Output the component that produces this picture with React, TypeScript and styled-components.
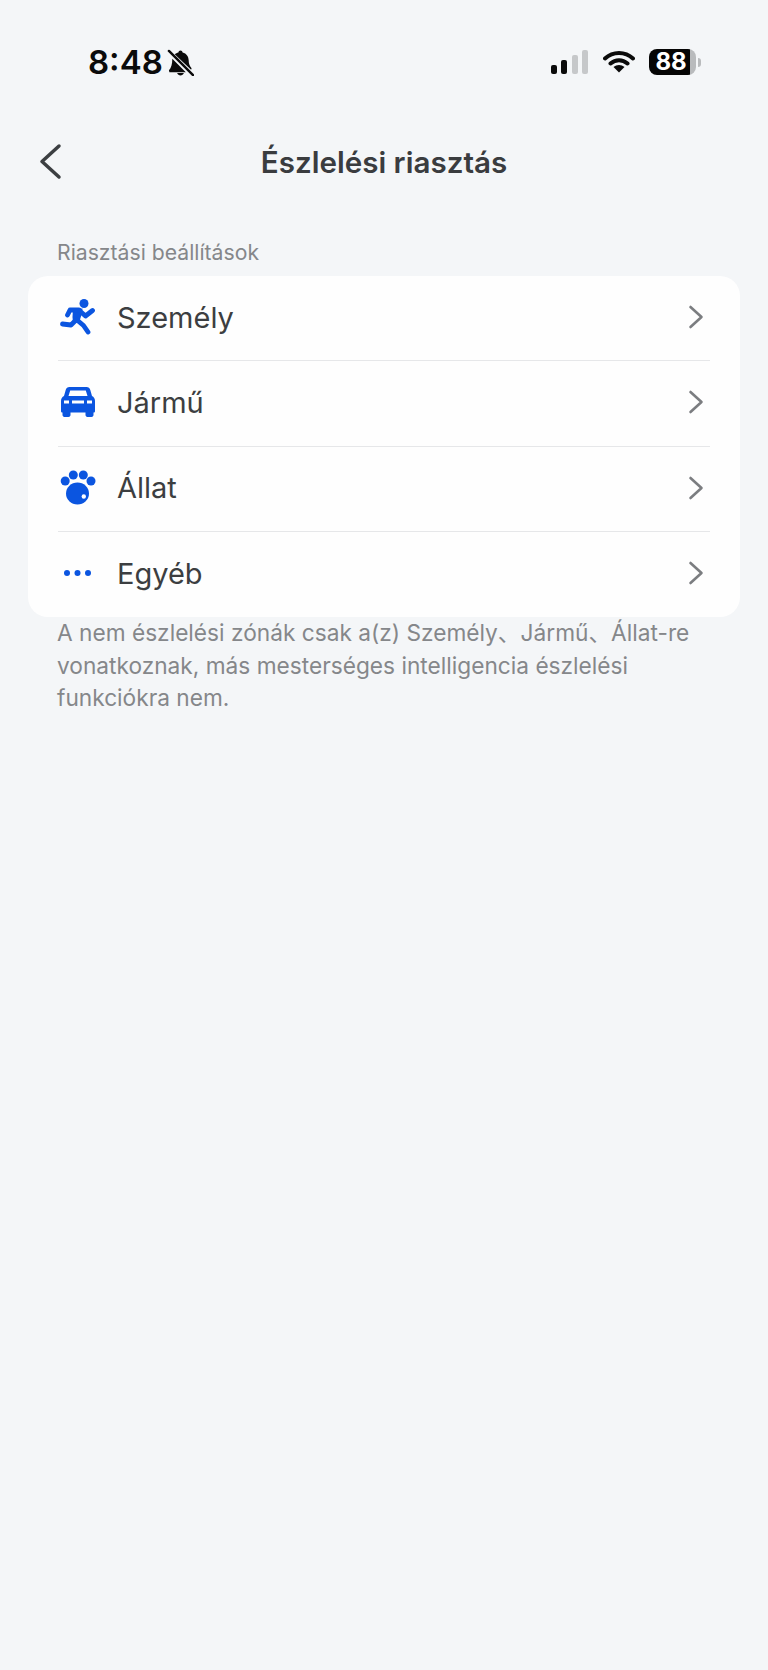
import styled, { createGlobalStyle } from 'styled-components';

const GlobalStyle = createGlobalStyle`
  html, body {
    margin: 0;
    padding: 0;
    background: #f4f6f8;
  }
  body {
    font-family: "Inter", "Noto Sans CJK SC", sans-serif;
  }
`;

const Page = styled.div`
  width: 768px;
  height: 1670px;
  overflow: hidden;
  background: #f4f6f8;
`;

const StatusBar = styled.div`
  height: 124px;
  display: flex;
  align-items: center;
  padding: 0 67px 0 88px;
  box-sizing: border-box;
`;

const Time = styled.span`
  font-size: 33px;
  font-weight: 600;
  color: #0b0b0b;
`;

const BellIcon = styled.svg`
  width: 27px;
  height: 27px;
  margin-left: 4px;
`;

const StatusRight = styled.div`
  margin-left: auto;
  display: flex;
  align-items: center;
`;

const Signal = styled.div`
  display: flex;
  align-items: flex-end;
  gap: 4.5px;
  height: 24px;
`;

const SignalBar = styled.span<{ $h: number; $off?: boolean }>`
  width: 6px;
  height: ${(p) => p.$h}px;
  border-radius: 2px;
  background: ${(p) => (p.$off ? '#c6c8ca' : '#0b0b0b')};
`;

const WifiIcon = styled.svg`
  width: 32px;
  height: 24px;
  margin-left: 15px;
  margin-top: -2px;
`;

const Battery = styled.div`
  width: 47px;
  height: 26px;
  margin-left: 14px;
  border-radius: 8px;
  background: linear-gradient(to right, #050505 88%, #b9bbbd 88%);
  color: #fff;
  font-size: 24px;
  font-weight: 700;
  line-height: 26px;
  text-align: center;
  padding-right: 3px;
  box-sizing: border-box;
`;

const BatteryTip = styled.span`
  width: 3px;
  height: 9px;
  margin-left: 2px;
  border-radius: 0 3px 3px 0;
  background: #b9bbbd;
`;

const NavBar = styled.div`
  height: 76px;
  position: relative;
  display: flex;
  align-items: center;
  justify-content: center;
`;

const BackIcon = styled.svg`
  position: absolute;
  left: 38px;
  top: 18px;
  width: 26px;
  height: 38px;
`;

const Title = styled.h1`
  margin: 0;
  font-size: 29.6px;
  font-weight: 600;
  color: #3a3c3f;
`;

const SectionLabel = styled.div`
  padding: 38px 57px 0;
  height: 38px;
  font-size: 21.2px;
  line-height: 28px;
  color: #85878a;
`;

const Card = styled.div`
  margin: 0 28px;
  padding: 0 30px;
  background: #fefefe;
  border-radius: 20px;
`;

const Row = styled.div<{ $last?: boolean }>`
  height: 85.25px;
  box-sizing: border-box;
  padding-bottom: 2px;
  display: flex;
  align-items: center;
  border-bottom: ${(p) => (p.$last ? 'none' : '1.5px solid #e6e7e9')};
`;

const IconBox = styled.svg`
  width: 36px;
  height: 36px;
  margin-left: 2px;
  color: #0b55e0;
  fill: currentColor;
`;

const RowLabel = styled.span`
  margin-left: 21px;
  font-size: 29px;
  color: #3c3e41;
`;

const Chevron = styled.svg`
  margin-left: auto;
  margin-right: 6px;
  width: 16px;
  height: 24px;
`;

const Footnote = styled.p`
  margin: 0;
  padding: 0 57px;
  font-size: 22.7px;
  line-height: 32.5px;
  color: #85878a;
`;

const rows = [
  { label: 'Személy', icon: 'run' },
  { label: 'Jármű', icon: 'car' },
  { label: 'Állat', icon: 'paw' },
  { label: 'Egyéb', icon: 'more' },
];

const RowIcon = ({ name }: { name: string }) => {
  if (name === 'run') {
    return (
      <IconBox viewBox="0 0 36 36">
        <circle cx="24" cy="4.500" r="4.500" />
        <path d="M13 9.500h9.500l-.5 5-3 9-6 .5-.5-6z" />
        <path
          d="M7.500 16l2.500-5h9M21 13l4.500 4 7-5.500M15 22l-4 4-8.500-1M17 21l6.500 5.500 4.500 6.500"
          fill="none"
          stroke="currentColor"
          strokeWidth="4.800"
          strokeLinecap="round"
          strokeLinejoin="round"
        />
      </IconBox>
    );
  }
  if (name === 'car') {
    return (
      <IconBox viewBox="0 0 36 36">
        <path
          fillRule="evenodd"
          d="M9.500 3h17c2 0 3.300 1 3.800 3l1.700 6c1.800 1 3 2.500 3 5v10c0 1-.5 1.500-1.500 1.500V31c0 1-1 2-2 2h-4c-1 0-2-1-2-2v-2.500H10.500V31c0 1-1 2-2 2h-4c-1 0-2-1-2-2v-2.500C1.500 28.500 1 28 1 27V17c0-2.500 1.200-4 3-5l1.700-6c.5-2 1.800-3 3.800-3zm.7 3.500L8.500 12h19l-1.700-5.500H10.200zM4 16.500v3h5v-3H4zm8 0v3h12v-3H12zm15 0v3h5v-3h-5z"
        />
      </IconBox>
    );
  }
  if (name === 'paw') {
    return (
      <IconBox viewBox="0 0 36 36">
        <circle cx="5.200" cy="11" r="4.500" />
        <circle cx="13.300" cy="5" r="4.500" />
        <circle cx="23.300" cy="5" r="4.500" />
        <circle cx="31" cy="11" r="4.500" />
        <ellipse cx="17.500" cy="23.500" rx="11.500" ry="11" />
        <circle cx="23.800" cy="26.500" r="2.200" fill="#fff" />
      </IconBox>
    );
  }
  return (
    <IconBox viewBox="0 0 36 36">
      <circle cx="7" cy="18" r="3" />
      <circle cx="17.500" cy="18" r="3" />
      <circle cx="28" cy="18" r="3" />
    </IconBox>
  );
};

export default function App() {
  return (
    <>
      <GlobalStyle />
      <Page>
        <StatusBar>
          <Time>8:48</Time>
          <BellIcon viewBox="0 0 28 28">
            <path d="M14 1.500c1.200 0 2 .8 2.200 2 4 1 6.300 4.300 6.300 8.500 0 2.500.5 5 3 8l-.5 1.500L8 5.500C9 4.500 10.500 4 11.800 3.500c.2-1.200 1-2 2.200-2zM5.500 10l14 14H2.500l-.5-2c2.500-2.500 3.500-6.500 3.500-12zM10.500 25h7c-.5 1.500-2 2.500-3.500 2.500s-3-1-3.500-2.500z" fill="#0b0b0b" />
            <path d="M2 2l25 25" stroke="#0b0b0b" strokeWidth="2.500" strokeLinecap="round" />
          </BellIcon>
          <StatusRight>
            <Signal>
              <SignalBar $h={9} />
              <SignalBar $h={14} />
              <SignalBar $h={19} $off />
              <SignalBar $h={24} $off />
            </Signal>
            <WifiIcon viewBox="0 0 32 24">
              <path
                d="M2 9.500C10 2 22 2 30 9.500M7.500 14.500c5-4.500 12-4.500 17 0"
                fill="none"
                stroke="#0b0b0b"
                strokeWidth="4"
                strokeLinecap="round"
              />
              <path d="M16 23.500l-5.500-5.500c3-2.800 8-2.800 11 0z" fill="#0b0b0b" />
            </WifiIcon>
            <Battery>88</Battery>
            <BatteryTip />
          </StatusRight>
        </StatusBar>
        <NavBar>
          <BackIcon viewBox="0 0 26 38">
            <path d="M21 4L4 19.500 21 35" fill="none" stroke="#3c3f42" strokeWidth="3.500" strokeLinecap="round" strokeLinejoin="round" />
          </BackIcon>
          <Title>Észlelési riasztás</Title>
        </NavBar>
        <SectionLabel>Riasztási beállítások</SectionLabel>
        <Card>
          {rows.map((r, i) => (
            <Row key={r.label} $last={i === rows.length - 1}>
              <RowIcon name={r.icon} />
              <RowLabel>{r.label}</RowLabel>
              <Chevron viewBox="0 0 16 24">
                <path d="M2.500 2l11 10-11 10" fill="none" stroke="#7b7d80" strokeWidth="2.600" strokeLinecap="round" strokeLinejoin="round" />
              </Chevron>
            </Row>
          ))}
        </Card>
        <Footnote>
          A nem észlelési zónák csak a(z) Személy、Jármű、Állat-re vonatkoznak, más mesterséges intelligencia észlelési funkciókra nem.
        </Footnote>
      </Page>
    </>
  );
}
